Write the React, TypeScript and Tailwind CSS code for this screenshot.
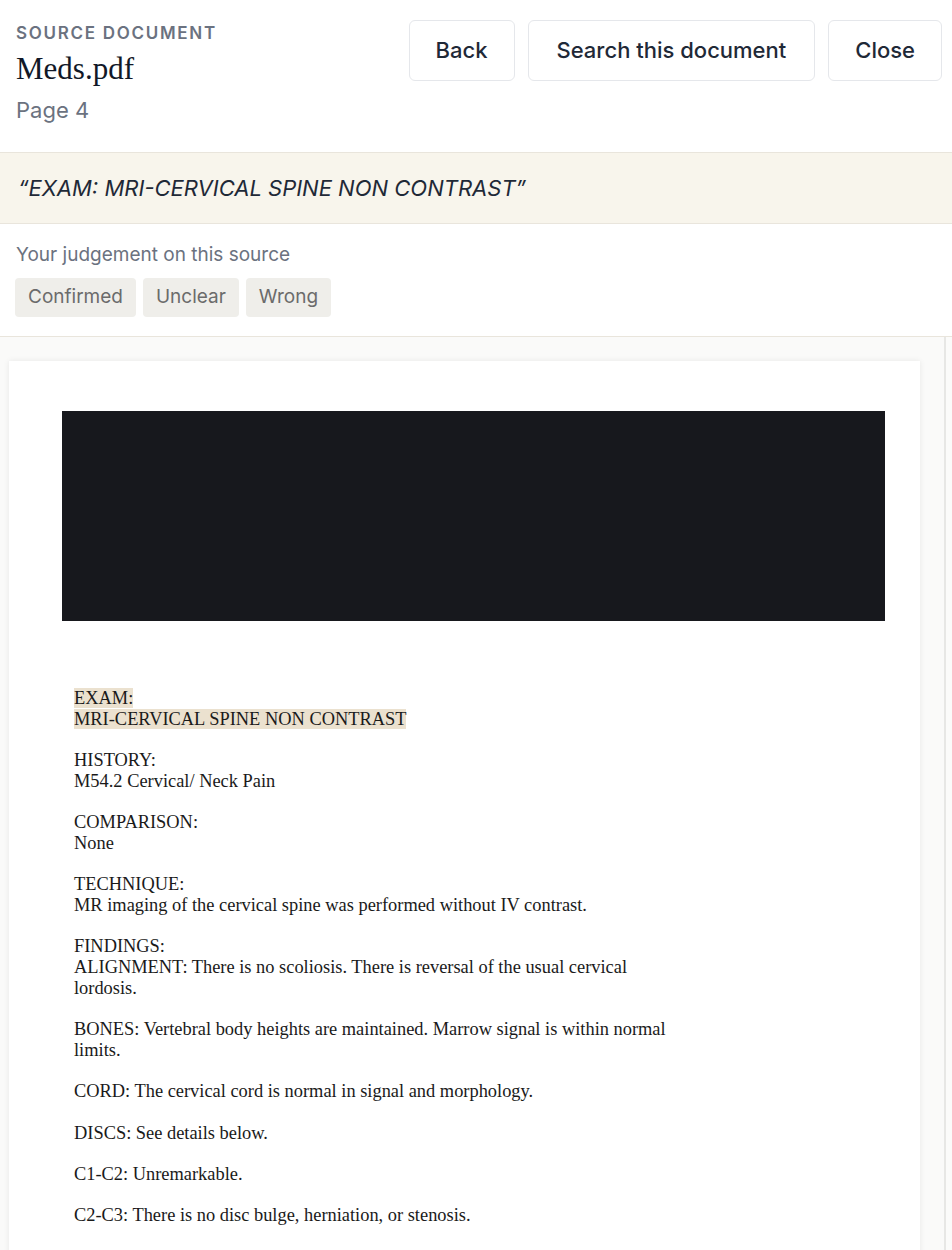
const sections: { lines: string[]; highlight?: boolean }[] = [
  { lines: ['EXAM:', 'MRI-CERVICAL SPINE NON CONTRAST'], highlight: true },
  { lines: ['HISTORY:', 'M54.2 Cervical/ Neck Pain'] },
  { lines: ['COMPARISON:', 'None'] },
  { lines: ['TECHNIQUE:', 'MR imaging of the cervical spine was performed without IV contrast.'] },
  {
    lines: [
      'FINDINGS:',
      'ALIGNMENT: There is no scoliosis. There is reversal of the usual cervical',
      'lordosis.',
    ],
  },
  { lines: ['BONES: Vertebral body heights are maintained. Marrow signal is within normal', 'limits.'] },
  { lines: ['CORD: The cervical cord is normal in signal and morphology.'] },
  { lines: ['DISCS: See details below.'] },
  { lines: ['C1-C2: Unremarkable.'] },
  { lines: ['C2-C3: There is no disc bulge, herniation, or stenosis.'] },
  { lines: ['C3-C4: There is no disc bulge, herniation, or stenosis.'] },
  { lines: ['C4-C5: There is no disc bulge, herniation, or stenosis.'] },
];

const judgements = ['Confirmed', 'Unclear', 'Wrong'];

export default function App() {
  return (
    <div className="h-[1250px] overflow-hidden bg-white flex flex-col font-['Inter',sans-serif]">
      {/* Header */}
      <div className="flex items-start justify-between pl-4 pr-[10px] pt-5 h-[152px] shrink-0">
        <div className="flex flex-col pt-px">
          <span className="text-[17px] font-semibold tracking-[0.1em] text-[#6b7280] leading-6">
            SOURCE DOCUMENT
          </span>
          <span className="font-['Liberation_Serif',serif] text-[31px] leading-9 text-[#111827] mt-[6px]">
            Meds.pdf
          </span>
          <span className="text-[22px] text-[#6b7280] leading-7 mt-[9px]">Page 4</span>
        </div>
        <div className="flex gap-[13px]">
          <button className="h-[61px] px-[26px] border border-[#e5e7eb] rounded-md text-[22px] font-medium text-[#1f2937]">
            Back
          </button>
          <button className="h-[61px] px-[28px] border border-[#e5e7eb] rounded-md text-[22px] font-medium text-[#1f2937]">
            Search this document
          </button>
          <button className="h-[61px] px-[26px] border border-[#e5e7eb] rounded-md text-[22px] font-medium text-[#1f2937]">
            Close
          </button>
        </div>
      </div>

      {/* Quoted passage */}
      <div className="h-[72px] shrink-0 flex items-center px-[18px] bg-[#f8f5ec] border-y border-[#e9e5dc]">
        <span className="italic text-[22px] text-[#1f2937]">
          “EXAM: MRI-CERVICAL SPINE NON CONTRAST”
        </span>
      </div>

      {/* Judgement */}
      <div className="h-[113px] shrink-0 px-4 pt-[19px] border-b border-[#e9e5dc]">
        <p className="text-[19px] text-[#6b7280] leading-6">Your judgement on this source</p>
        <div className="flex gap-[7px] mt-[11px] -ml-px">
          {judgements.map((j) => (
            <button
              key={j}
              className="h-[39px] px-[13px] rounded bg-[#efeeea] text-[19px] text-[#6b6b6b]"
            >
              {j}
            </button>
          ))}
        </div>
      </div>

      {/* Document viewer */}
      <div className="flex-1 flex bg-[#fafaf9] overflow-hidden">
        <div className="flex-1 pl-[9px] pr-6 pt-6">
          <div className="bg-white shadow-[0_0_6px_rgba(0,0,0,0.08)] pl-[53px] pr-[35px] pt-[50px] h-[1000px]">
            <div className="h-[210px] bg-[#17181d]" />
            <div className="mt-[67px] pl-3 font-['Liberation_Serif',serif] text-[18.4px] leading-[20.7px] text-[#1a1a1a] flex flex-col gap-[20.7px]">
              {sections.map((s, i) => (
                <div key={i}>
                  {s.lines.map((l, k) => (
                    <div key={k}>
                      {s.highlight ? <span className="bg-[#ebe1cf]">{l}</span> : l}
                    </div>
                  ))}
                </div>
              ))}
            </div>
          </div>
        </div>
        <div className="w-2 shrink-0 border-l-2 border-[#e7e7e5] bg-[#fbfbfa]" />
      </div>
    </div>
  );
}
